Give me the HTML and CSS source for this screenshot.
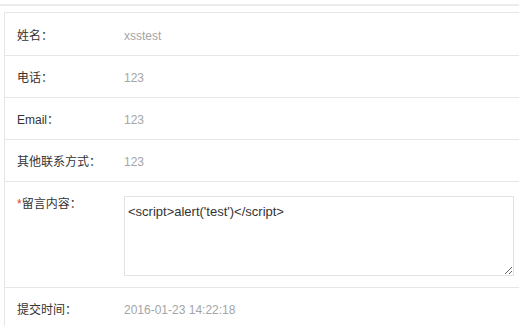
FILE: index.html
```html
<!DOCTYPE html>
<html lang="zh-CN">
<head>
    <meta charset="UTF-8">
    <title>留言详情</title>
    <link rel="stylesheet" href="styles.css">
</head>
<body>
    <div class="topline"></div>
    <div class="detail">
        <div class="row row-first">
            <span class="label">姓名：</span>
            <span class="value">xsstest</span>
        </div>
        <div class="row">
            <span class="label">电话：</span>
            <span class="value">123</span>
        </div>
        <div class="row">
            <span class="label">Email：</span>
            <span class="value">123</span>
        </div>
        <div class="row">
            <span class="label">其他联系方式：</span>
            <span class="value">123</span>
        </div>
        <div class="row row-msg">
            <span class="label"><em class="req">*</em>留言内容：</span>
            <textarea class="msg">&lt;script&gt;alert('test')&lt;/script&gt;</textarea>
        </div>
        <div class="row row-last">
            <span class="label">提交时间：</span>
            <span class="value">2016-01-23 14:22:18</span>
        </div>
    </div>
</body>
</html>
```

FILE: styles.css
```css
/* page */
html, body {
    margin: 0;
    padding: 0;
    background: #fff;
    overflow: hidden;
}

body {
    font-family: 'Liberation Sans', Arial, 'Noto Sans CJK SC', sans-serif;
    font-size: 12px;
    color: #333;
}

.topline {
    height: 2px;
    margin-top: 4px;
    background: #ececec;
}

/* detail box */
.detail {
    margin: 6px 0 0 4px;
    border-top: 1px solid #e6e6e6;
    border-left: 1px solid #e6e6e6;
}

.row {
    display: flex;
    align-items: flex-start;
    padding: 12px 0 9px 12px;
    line-height: 20px;
    border-bottom: 1px solid #e6e6e6;
}

.row-first {
    padding-top: 13px;
}

.label {
    width: 107px;
    flex: none;
    color: #333;
}

.value {
    color: #a5a5a5;
}

.req {
    font-style: normal;
    color: #e4393c;
}

.row-msg {
    padding-top: 14px;
    padding-bottom: 11px;
}

.row-msg .label {
    margin-top: -2px;
}

.msg {
    width: 382px;
    height: 68px;
    margin: 0;
    padding: 5px 3px;
    border: 1px solid #e3e3e3;
    font-family: 'Liberation Sans', Arial, sans-serif;
    font-size: 13px;
    line-height: 20px;
    color: #333;
    box-sizing: content-box;
    outline: none;
    resize: both;
}

.row-last {
    padding-top: 12px;
    border-bottom: 0;
}
```
